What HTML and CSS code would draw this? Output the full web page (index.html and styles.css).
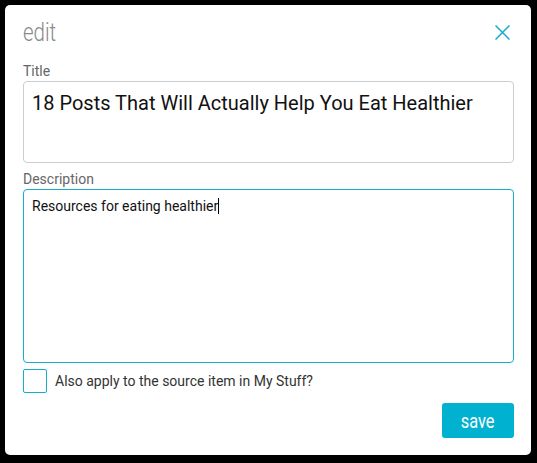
FILE: index.html
```html
<!DOCTYPE html>
<html lang="en">
<head>
<meta charset="utf-8">
<title>edit</title>
<link rel="stylesheet" href="styles.css">
</head>
<body>
<div class="dialog">
  <div class="header">
    <h1 class="heading"><span class="cond">edit</span></h1>
    <button class="close" aria-label="close">
      <svg width="15" height="15" viewBox="0 0 15 15"><path d="M0.5 0.5 L14.5 14.5 M14.5 0.5 L0.5 14.5" stroke="#14aecb" stroke-width="1.5" fill="none"/></svg>
    </button>
  </div>
  <div class="field">
    <div class="label">Title</div>
    <div class="box box-title">18 Posts That Will Actually Help You Eat Healthier</div>
  </div>
  <div class="field field-desc">
    <div class="label">Description</div>
    <div class="box box-desc">Resources for eating healthier<span class="caret"></span></div>
  </div>
  <label class="check-row">
    <span class="checkbox"></span>
    <span class="check-label">Also apply to the source item in My Stuff?</span>
  </label>
  <div class="actions">
    <button class="save"><span class="cond">save</span></button>
  </div>
</div>
</body>
</html>
```

FILE: styles.css
```css
html, body {
  margin: 0;
  padding: 0;
  background: #000;
}
body {
  padding: 5px;
  font-family: Roboto, "Noto Sans", sans-serif;
}
.dialog {
  box-sizing: border-box;
  width: 526px;
  height: 450px;
  background: #fff;
  border-radius: 5px;
  padding: 13px 17px 0 18px;
}
.header {
  display: flex;
  justify-content: space-between;
  align-items: center;
  height: 30px;
}
.heading {
  margin: 0;
  font-weight: 300;
  font-size: 25px;
  line-height: 30px;
  color: #8a8a8a;
}
.cond {
  display: inline-block;
  transform: scaleX(0.82);
  transform-origin: left center;
}
.close {
  border: 0;
  background: none;
  padding: 0;
  margin: 0 4px 0 0;
  width: 15px;
  height: 15px;
  position: relative;
  top: -1px;
  display: flex;
}
.field {
  margin-top: 15px;
}
.field-desc {
  margin-top: 8px;
}
.label {
  font-size: 14px;
  line-height: 16px;
  color: #666;
  margin-bottom: 2px;
}
.box {
  box-sizing: border-box;
  border: 1px solid #c9ced1;
  border-radius: 4px;
  color: #111;
  padding: 9px 8px 0 8px;
}
.box-title {
  height: 82px;
  font-size: 20px;
}
.box-desc {
  height: 174px;
  border-color: #14aecb;
  font-size: 14px;
  padding-top: 8px;
}
.caret {
  display: inline-block;
  width: 1px;
  height: 16px;
  background: #000;
  vertical-align: -3px;
}
.check-row {
  display: flex;
  align-items: center;
  gap: 8px;
  margin-top: 6px;
}
.checkbox {
  box-sizing: border-box;
  width: 24px;
  height: 24px;
  border: 1px solid #14aecb;
  border-radius: 2px;
}
.check-label {
  font-size: 14px;
  color: #333;
}
.actions {
  display: flex;
  justify-content: flex-end;
  margin-top: 10px;
}
.save {
  width: 72px;
  height: 35px;
  border: 0;
  border-radius: 3px;
  background: #00b2cf;
  color: #fff;
  font-family: Roboto, sans-serif;
  font-size: 20px;
  padding: 0;
  display: flex;
  align-items: center;
  justify-content: center;
}
.save .cond {
  transform-origin: center center;
}
```
